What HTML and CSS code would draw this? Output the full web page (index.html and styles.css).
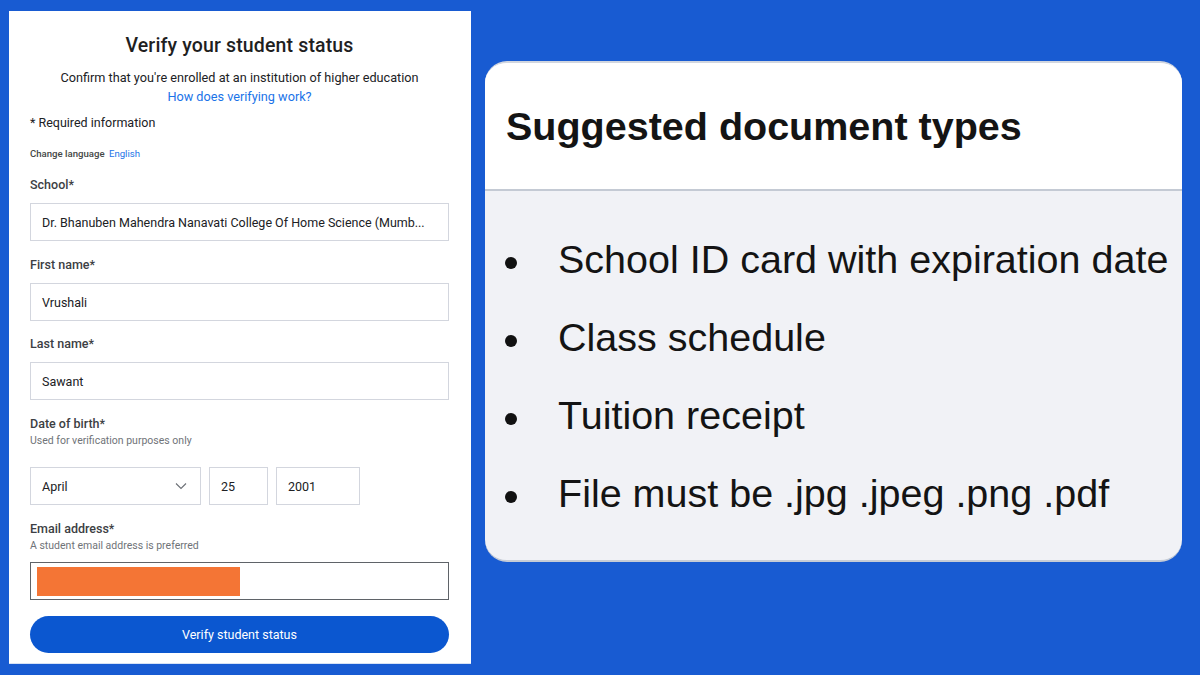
FILE: index.html
```html
<!DOCTYPE html>
<html lang="en">
<head>
<meta charset="utf-8">
<title>Verify your student status</title>
<link rel="stylesheet" href="styles.css">
</head>
<body>
<div class="page">
  <section class="form-panel">
    <h1 class="title">Verify your student status</h1>
    <p class="subtitle">Confirm that you're enrolled at an institution of higher education</p>
    <p class="how"><a href="#">How does verifying work?</a></p>
    <p class="required">* Required information</p>
    <p class="lang">Change language <a href="#">English</a></p>

    <div class="field first">
      <div class="label">School*</div>
      <div class="input">Dr. Bhanuben Mahendra Nanavati College Of Home Science (Mumb...</div>
    </div>
    <div class="field">
      <div class="label">First name*</div>
      <div class="input">Vrushali</div>
    </div>
    <div class="field last">
      <div class="label">Last name*</div>
      <div class="input">Sawant</div>
    </div>
    <div class="field dob">
      <div class="label">Date of birth*</div>
      <div class="hint">Used for verification purposes only</div>
      <div class="date-row">
        <div class="input month">April
          <svg class="chev" width="12" height="8" viewBox="0 0 12 8"><path d="M1 1.5 L6 6.5 L11 1.5" fill="none" stroke="#6b6f75" stroke-width="1.1"/></svg>
        </div>
        <div class="input day">25</div>
        <div class="input year">2001</div>
      </div>
    </div>
    <div class="field email">
      <div class="label">Email address*</div>
      <div class="hint">A student email address is preferred</div>
      <div class="input email-input"><span class="redact"></span></div>
    </div>
    <button class="submit">Verify student status</button>
  </section>

  <section class="doc-card">
    <div class="doc-head">Suggested document types</div>
    <ul class="doc-list">
      <li>School ID card with expiration date</li>
      <li>Class schedule</li>
      <li>Tuition receipt</li>
      <li>File must be .jpg .jpeg .png .pdf</li>
    </ul>
  </section>
</div>
</body>
</html>
```

FILE: styles.css
```css
* { box-sizing: border-box; }
html, body { margin: 0; padding: 0; }
body {
  width: 1200px;
  height: 675px;
  background: #185bd2;
  overflow: hidden;
  font-family: Roboto, "Liberation Sans", Arial, sans-serif;
}
.page {
  display: flex;
  align-items: flex-start;
  gap: 14px;
  padding: 11px 0 0 9px;
}
.form-panel {
  width: 462px;
  height: 653px;
  background: #fff;
  padding: 0 22px 0 21px;
  color: #202124;
  border-bottom: 1px solid #d7e2f5;
}
.title {
  margin: 23px 0 0;
  font-size: 19.5px;
  line-height: 24px;
  font-weight: 500;
  letter-spacing: 0.15px;
  text-align: center;
  color: #1f1f1f;
}
.subtitle {
  margin: 11px 0 0;
  font-size: 12.7px;
  line-height: 18px;
  text-align: center;
  color: #202124;
}
.how {
  margin: 1px 0 0;
  font-size: 12.7px;
  line-height: 18px;
  text-align: center;
}
.how a, .lang a { color: #1a73e8; text-decoration: none; }
.required {
  margin: 8px 0 0;
  font-size: 12.5px;
  line-height: 18px;
  color: #202124;
}
.lang {
  margin: 15px 0 0;
  font-size: 9.6px;
  line-height: 14px;
  font-weight: 500;
  color: #444746;
}
.lang a { font-weight: 400; margin-left: 2px; }
.field { margin-top: 15px; }
.field.first { margin-top: 15px; }
.field.last { margin-top: 14px; }
.field.dob { margin-top: 15px; }
.label {
  font-size: 12.5px;
  line-height: 18px;
  font-weight: 500;
  color: #3c4043;
}
.hint {
  font-size: 10.5px;
  line-height: 14px;
  color: #6f7378;
  margin-top: 1px;
}
.input {
  margin-top: 9px;
  height: 38px;
  border: 1px solid #d3d6de;
  padding: 0 11px;
  display: flex;
  align-items: center;
  font-size: 12.5px;
  color: #202124;
  white-space: nowrap;
  overflow: hidden;
}
.date-row {
  display: flex;
  gap: 8px;
  margin-top: 19px;
}
.date-row .input { margin-top: 0; }
.month { width: 171px; justify-content: space-between; }
.chev { margin-right: 2px; }
.day { width: 59px; }
.year { width: 84px; }
.field.email { margin-top: 15px; }
.email-input {
  border: 1.5px solid #5f6368;
  padding: 0 0 0 6px;
  height: 38px;
}
.redact {
  display: block;
  width: 203px;
  height: 29px;
  background: #f47535;
}
.submit {
  display: block;
  width: 100%;
  height: 37px;
  margin-top: 16px;
  border: 0;
  border-radius: 19px;
  background: #0b57d0;
  color: #fff;
  font-family: Roboto, "Liberation Sans", Arial, sans-serif;
  font-size: 12.5px;
}

.doc-card {
  width: 697px;
  margin-top: 50px;
  border-radius: 22px;
  overflow: hidden;
  background: #f1f2f6;
  border-top: 2px solid #d1d6df;
  border-bottom: 2px solid #c6ccd6;
  font-family: "Liberation Sans", Arial, sans-serif;
  color: #141414;
}
.doc-head {
  background: #fff;
  height: 128px;
  line-height: 126px;
  padding-left: 21px;
  font-size: 39.5px;
  font-weight: 700;
  border-bottom: 2px solid #c4cad4;
}
.doc-list {
  list-style: none;
  margin: 0;
  padding: 29px 0 28px;
}
.doc-list li {
  font-size: 39.5px;
  line-height: 78px;
  white-space: nowrap;
}
.doc-list li::before {
  content: "";
  display: inline-block;
  width: 12px;
  height: 12px;
  border-radius: 50%;
  background: #111;
  vertical-align: middle;
  margin: 0 41px 0 20px;
}
```
